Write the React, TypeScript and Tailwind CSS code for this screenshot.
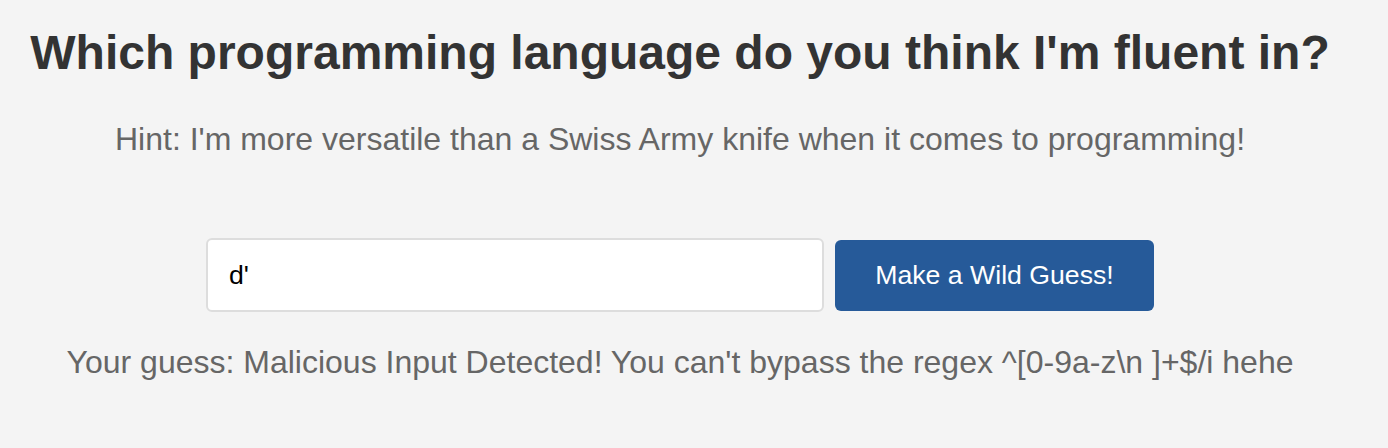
export default function App() {
  return (
    <div className="min-h-[448px] w-full bg-[#f4f4f4] text-center" style={{ fontFamily: '"Liberation Sans", Arial, sans-serif' }}>
      <div className="w-[1360px] pt-[27px]">
        <h1 className="text-[48px] font-bold leading-[52px] text-[#333333]">Which programming language do you think I'm fluent in?</h1>
        <p className="mt-[42px] text-[32px] leading-[36px] text-[#666666]">Hint: I'm more versatile than a Swiss Army knife when it comes to programming!</p>
        <div className="mt-[81px] flex items-center justify-center gap-[11px]">
          <input
            readOnly
            value="d'"
            className="h-[74px] w-[618px] rounded-[6px] border-2 border-[#dddddd] bg-white px-[21px] text-[26.67px] text-black outline-none"
          />
          <button className="h-[71px] w-[319px] rounded-[6px] bg-[#265a99] text-[26.67px] text-white">Make a Wild Guess!</button>
        </div>
        <p className="mt-[32px] text-[32px] leading-[36px] text-[#666666]">Your guess: Malicious Input Detected! You can't bypass the regex ^[0-9a-z\n ]+$/i hehe</p>
      </div>
    </div>
  );
}
